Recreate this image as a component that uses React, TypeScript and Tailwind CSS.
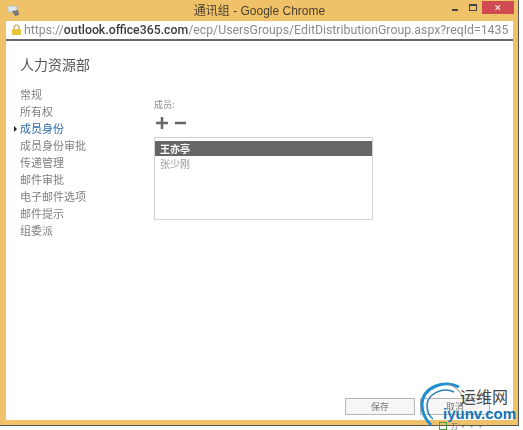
import React from "react";

const nav = ["常规", "所有权", "成员身份", "成员身份审批", "传递管理", "邮件审批", "电子邮件选项", "邮件提示", "组委派"];

export default function App() {
  return (
    <div className="relative w-[523px] h-[430px] overflow-hidden bg-white font-['Noto_Sans_CJK_SC','Liberation_Sans',sans-serif]">
      <div className="w-[519px] h-[426px] bg-[#efc269] border-r border-b border-[#555] flex flex-col blur-[0.3px]">
        <div className="h-[21px] shrink-0 flex items-center pl-[7px] pr-[4px]">
          <svg width="14" height="12" viewBox="0 0 14 12" className="shrink-0">
            <rect x="1" y="1" width="9" height="6" fill="#dfe6ea" stroke="#9aa" strokeWidth="0.5" />
            <path d="M5 6l6-1 1 5-4 1z" fill="#777" />
          </svg>
          <div className="flex-1 text-center text-[12px] leading-[21px] text-[#4a4030] pl-[46px] font-['Liberation_Sans','Noto_Sans_CJK_SC',sans-serif]">
            <span className="font-['Noto_Sans_CJK_SC',sans-serif]">通讯组</span> - Google Chrome
          </div>
          <div className="flex items-start h-[21px]">
            <div className="w-[6px] h-[2px] bg-[#444] mt-[9px] mr-[11px]" />
            <div className="w-[8px] h-[7px] border border-[#444] border-t-2 mt-[4px] mr-[5px]" />
            <div className="w-[32px] h-[13px] bg-[#cf4b50] flex items-center justify-center text-white text-[9px] leading-none mt-px">✕</div>
          </div>
        </div>
        <div className="flex-1 ml-[6px] mr-[5px] mb-[5px] bg-white flex flex-col min-h-0">
          <div className="h-[20px] shrink-0 border-b-2 border-[#6a6a6a] flex items-center pl-[5px]">
            <svg width="11" height="12" viewBox="0 0 11 12" className="shrink-0">
              <path d="M3 5V3.5a2.5 2.5 0 015 0V5" fill="none" stroke="#b9a35a" strokeWidth="1.2" />
              <rect x="1" y="5" width="9" height="6" rx="1" fill="#e6c33d" />
            </svg>
            <span className="ml-[2px] text-[12.3px] leading-[18px] text-[#8b8b8b] whitespace-nowrap font-['Roboto',sans-serif]">
              https://<span className="text-[#3c3c3c] font-medium">outlook.office365.com</span>/ecp/UsersGroups/EditDistributionGroup.aspx?reqId=1435
            </span>
          </div>
          <div className="flex-1 relative flex min-h-0 blur-[0.3px]">
            <div className="w-[148px] shrink-0 pl-[14px] pt-[13px]">
              <div className="text-[14px] leading-[20px] text-[#555]">人力资源部</div>
              <ul className="mt-[12px] text-[11px] leading-[17px] text-[#808080]">
                {nav.map((n, i) => (
                  <li key={n} className={`relative ${i === 2 ? "text-[#2f6da8]" : ""}`}>
                    {i === 2 && <span className="absolute left-[-6px] top-[6px] w-0 h-0 border-y-[3px] border-y-transparent border-l-[3px] border-l-[#222]" />}
                    {n}
                  </li>
                ))}
              </ul>
            </div>
            <div className="pt-[58px]">
              <div className="text-[9px] leading-[12px] text-[#888]">成员:</div>
              <div className="flex items-center gap-[7px] h-[14px] mt-[5px] pl-[2px]">
                <svg width="12" height="12" viewBox="0 0 12 12"><path d="M0 6h12M6 0v12" stroke="#666" strokeWidth="2.5" /></svg>
                <svg width="11" height="12" viewBox="0 0 11 12"><path d="M0 6h11" stroke="#666" strokeWidth="2.5" /></svg>
              </div>
              <div className="mt-[7px] w-[219px] h-[83px] border border-[#d2d2d2] pt-[3px]">
                <div className="h-[15px] bg-[#666] text-white font-bold text-[10px] leading-[15px] pl-[5px]">王亦亭</div>
                <div className="text-[10px] leading-[15px] pl-[5px] text-[#999]">张少刚</div>
              </div>
            </div>
            <div className="absolute right-[23px] bottom-[5px] flex gap-[5px]">
              <div className="w-[70px] h-[17px] bg-[#f6f6f6] border border-[#b5b5b5] text-center text-[9px] leading-[15px] text-[#777]">保存</div>
              <div className="w-[70px] h-[17px] bg-[#f6f6f6] border border-[#b5b5b5] text-center text-[9px] leading-[15px] text-[#777]">取消</div>
            </div>
          </div>
        </div>
      </div>
      <div className="absolute left-[419px] top-[381px] w-[104px] h-[49px]">
        <svg className="absolute left-0 top-0" width="50" height="49" viewBox="0 0 50 49">
          <path d="M40 6C26 -2 3 6 3 24c0 9 4 15 9 20" fill="none" stroke="#1f8fd0" strokeWidth="3" />
          <path d="M35 11C24 6 9 12 8 24c0 6 2 11 6 14" fill="none" stroke="#2a7fb8" strokeWidth="1.5" />
          <path d="M28 3c9 2 17 10 17 20" fill="none" stroke="#8a8a8a" strokeWidth="1" />
        </svg>
        <div className="absolute left-[41px] top-[6px] text-[16px] leading-[18px] text-[#444] whitespace-nowrap">运维网</div>
        <div className="absolute left-[24px] top-[24px] text-[15px] leading-[18px] font-bold text-[#1273b8] whitespace-nowrap font-['Liberation_Sans',sans-serif]">iyunv.com</div>
        <div className="absolute left-[20px] top-[41px] w-[8px] h-[8px] border border-[#4a9e4a]" />
        <div className="absolute left-[32px] top-[41px] text-[7px] leading-[8px] text-[#666] whitespace-nowrap">万 · · ·</div>
      </div>
    </div>
  );
}
